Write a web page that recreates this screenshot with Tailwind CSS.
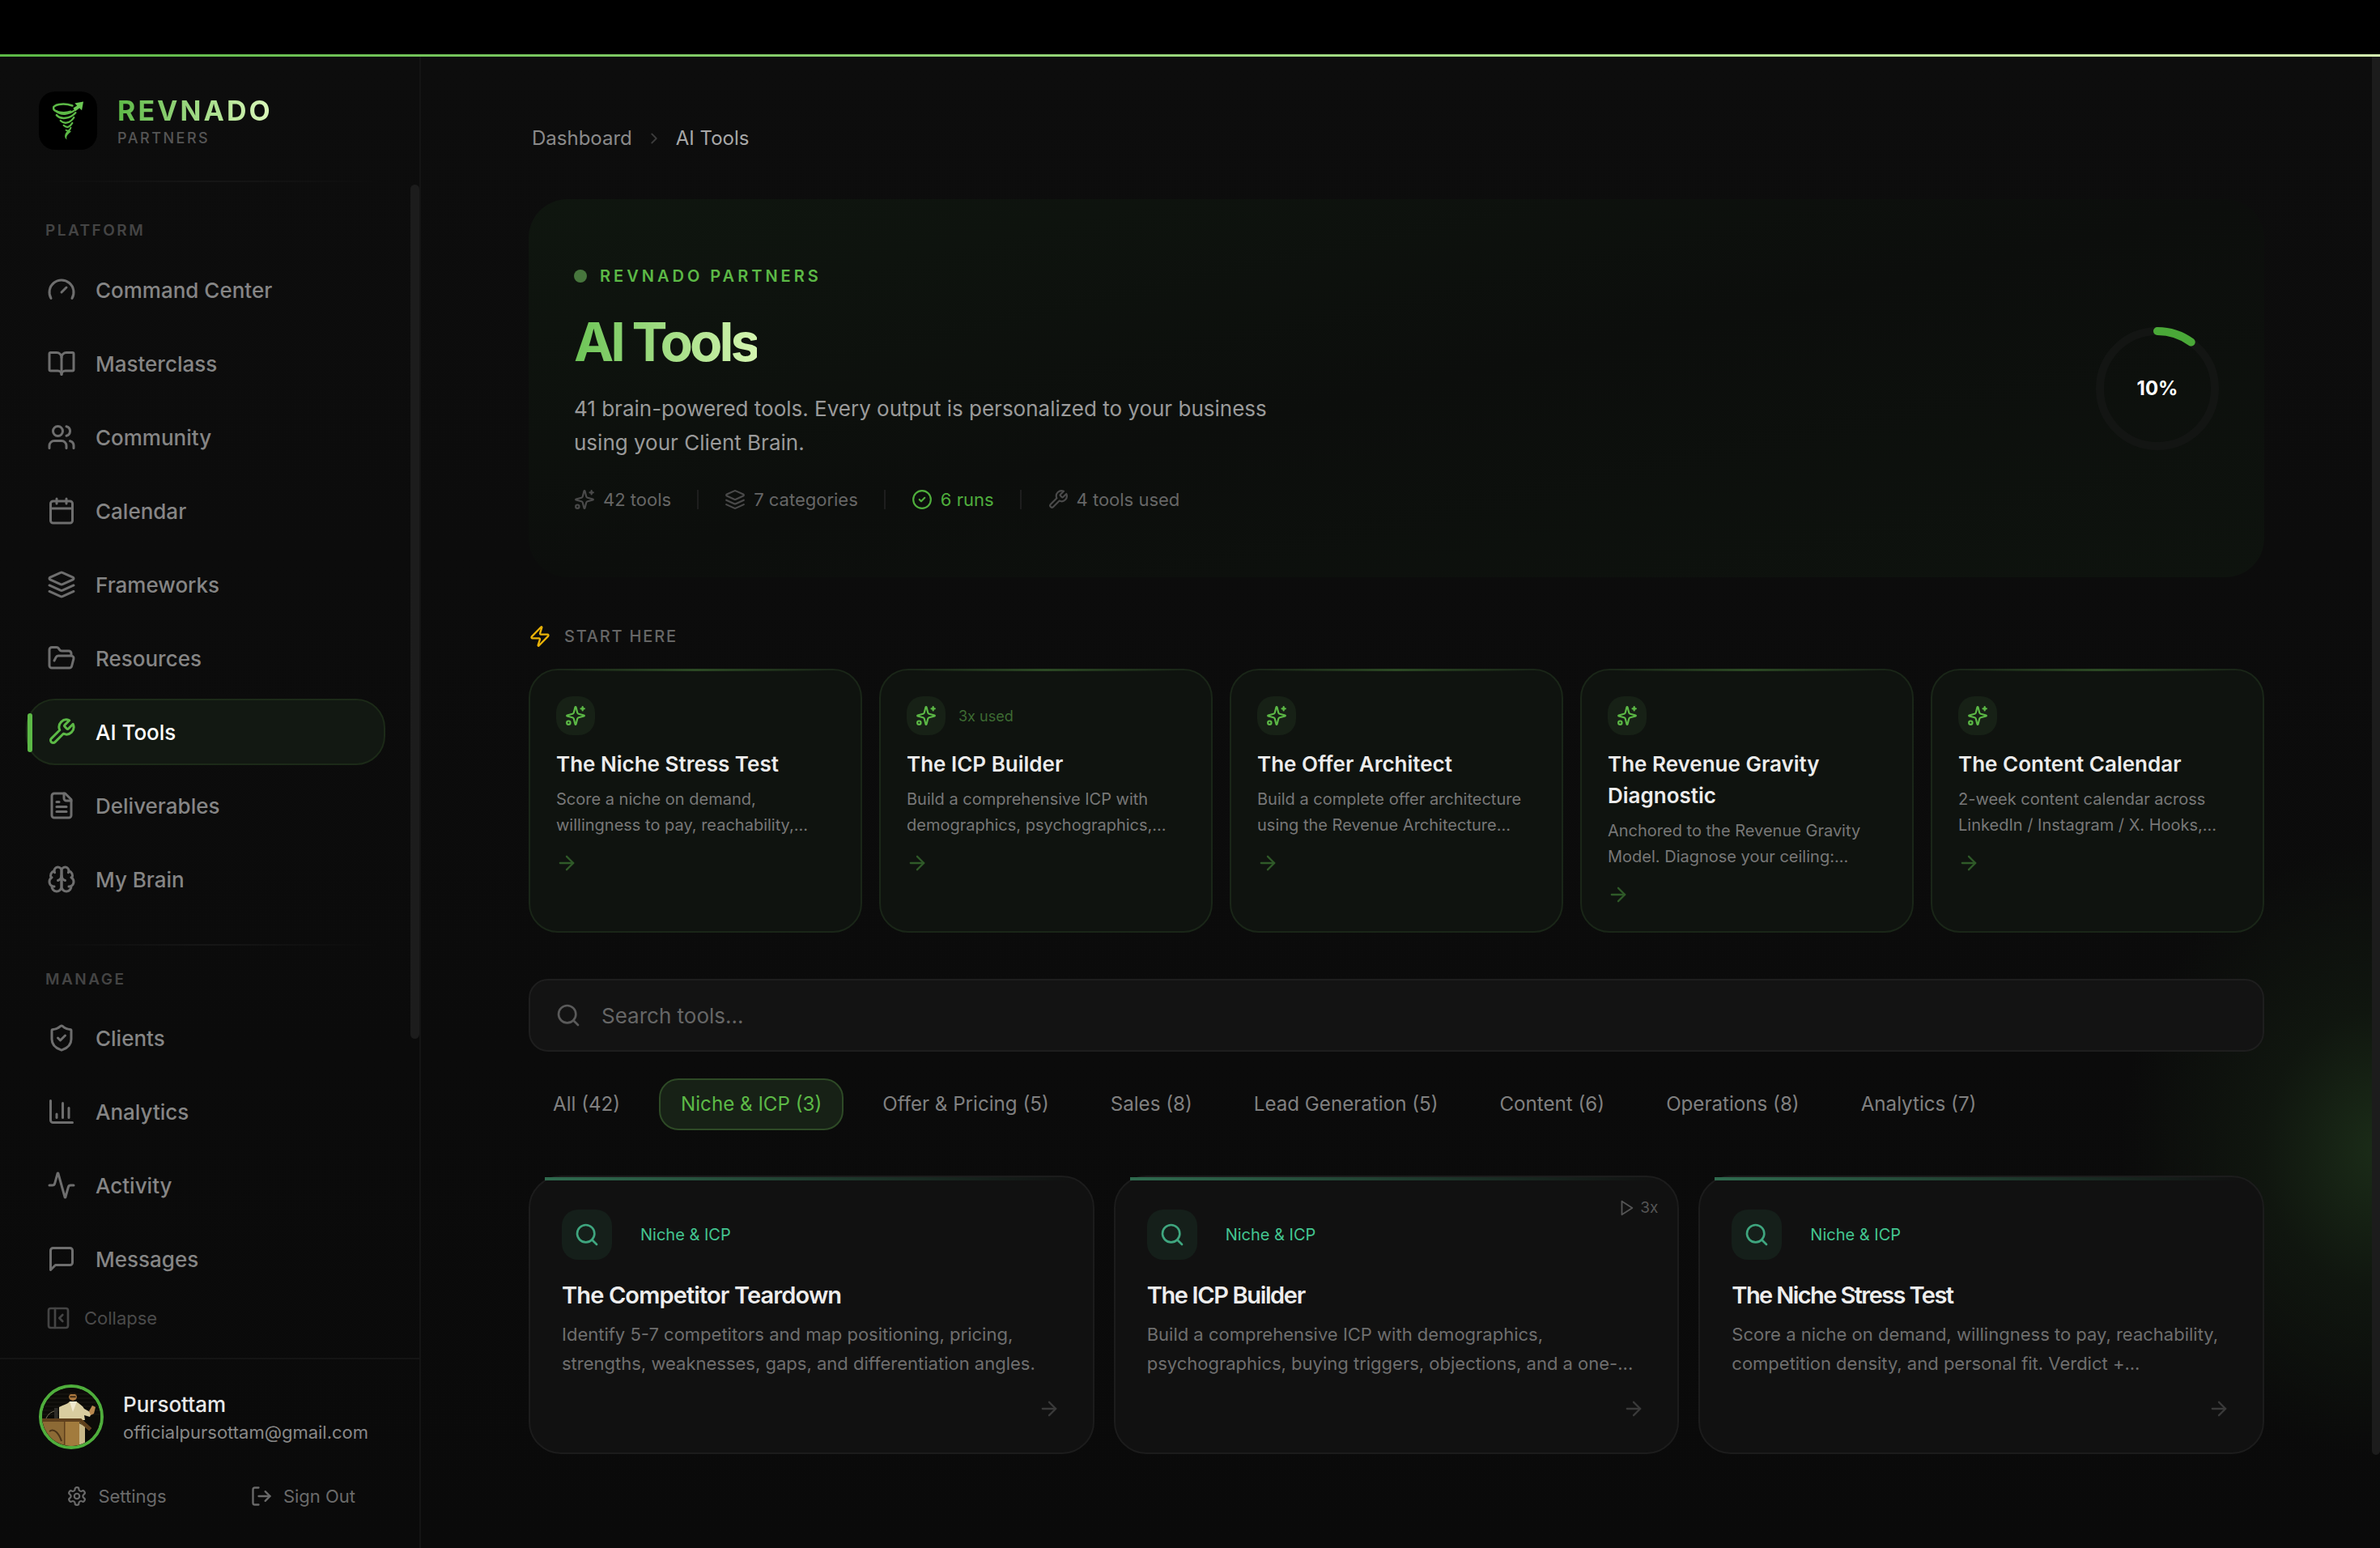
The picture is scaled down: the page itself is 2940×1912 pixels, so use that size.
<!doctype html>
<html lang="en">
<head>
<meta charset="utf-8">
<title>AI Tools</title>
<script src="https://cdn.jsdelivr.net/npm/@tailwindcss/browser@4"></script>
</head>
<body class="bg-black font-[family-name:Inter,sans-serif]">
<div class="w-[2940px] h-[1912px] flex flex-col overflow-hidden">
  <div class="h-[67px] shrink-0 bg-black"></div>
  <div class="h-[3px] shrink-0 bg-linear-to-r from-[#5cb946] to-[#d4f5b0]"></div>
  <div class="flex-1 flex min-h-0 bg-linear-to-b from-[#0d0d0d] to-[#0a0a0a]">

    <!-- SIDEBAR -->
    <aside class="relative w-[520px] shrink-0 border-r-2 border-[#141414] flex flex-col">
      <div class="absolute left-[507px] top-[158px] w-[11px] h-[1055px] rounded-full bg-[#1c1c1c]"></div>
      <div class="flex items-center gap-[25px] px-[48px] pt-[43px]">
        <div class="w-[72px] h-[72px] rounded-[20px] bg-black flex items-center justify-center">
          <svg viewBox="0 0 40 48" class="w-[39px] h-[48px] fill-none" stroke-linecap="round">
            <g class="stroke-[#5cb946]">
              <path stroke-width="2.600" d="M25 5C13 1 0 4 1 8.500C2 13.500 14 15.500 23 12.500"/>
              <path stroke-width="2.400" d="M5 12C10 17 20 17 29 10"/>
              <path stroke-width="2.600" d="M5 17C10 23 22 22 29 14"/>
              <path stroke-width="2.400" d="M10 24C15 29 22 27 27 20"/>
              <path stroke-width="2.200" d="M14 30C18 34 22 32 25 27"/>
              <path stroke-width="2" d="M17 36C20 38 22 36 23 33"/>
            </g>
            <path d="M28 2L39 0L37 11L34 8L29 12L26 8L31 5Z" class="fill-[#6cc954]"/>
            <path d="M20 36C15 40 14 45 18 48C16.500 43 20 41 23.500 37.500Z" class="fill-[#5cb946]"/>
          </svg>
        </div>
        <div class="flex flex-col">
          <span class="text-[34px] leading-[42px] font-bold tracking-[0.09em] w-fit bg-linear-to-r from-[#5cb946] to-[#dcf8bc] bg-clip-text text-transparent">REVNADO</span>
          <span class="mt-[1px] text-[18px] leading-[24px] font-medium tracking-[0.14em] text-[#555555]">PARTNERS</span>
        </div>
      </div>
      <div class="h-[2px] mt-[38px] mx-[48px] bg-linear-to-r from-transparent via-[#161616] to-transparent"></div>

      <div class="mt-[48px] pl-[56px] text-[19px] leading-[24px] font-semibold tracking-[0.13em] text-[#444444]">PLATFORM</div>
      <nav class="mt-[20px] w-[476px] pl-[32px] flex flex-col gap-[9px] text-[26px] font-medium text-[#858585]">
        <a class="h-[82px] flex items-center gap-[24px] pl-[26px]"><svg viewBox="0 0 24 24" class="w-9 h-9 shrink-0 fill-none stroke-current stroke-2 text-[#6e6e6e]" stroke-linecap="round" stroke-linejoin="round"><path d="m12 14 4-4"/><path d="M3.340 19a10 10 0 1 1 17.320 0"/></svg>Command Center</a>
        <a class="h-[82px] flex items-center gap-[24px] pl-[26px]"><svg viewBox="0 0 24 24" class="w-9 h-9 shrink-0 fill-none stroke-current stroke-2 text-[#6e6e6e]" stroke-linecap="round" stroke-linejoin="round"><path d="M12 7v14"/><path d="M3 18a1 1 0 0 1-1-1V4a1 1 0 0 1 1-1h5a4 4 0 0 1 4 4 4 4 0 0 1 4-4h5a1 1 0 0 1 1 1v13a1 1 0 0 1-1 1h-6a3 3 0 0 0-3 3 3 3 0 0 0-3-3z"/></svg>Masterclass</a>
        <a class="h-[82px] flex items-center gap-[24px] pl-[26px]"><svg viewBox="0 0 24 24" class="w-9 h-9 shrink-0 fill-none stroke-current stroke-2 text-[#6e6e6e]" stroke-linecap="round" stroke-linejoin="round"><path d="M16 21v-2a4 4 0 0 0-4-4H6a4 4 0 0 0-4 4v2"/><circle cx="9" cy="7" r="4"/><path d="M22 21v-2a4 4 0 0 0-3-3.870"/><path d="M16 3.130a4 4 0 0 1 0 7.750"/></svg>Community</a>
        <a class="h-[82px] flex items-center gap-[24px] pl-[26px]"><svg viewBox="0 0 24 24" class="w-9 h-9 shrink-0 fill-none stroke-current stroke-2 text-[#6e6e6e]" stroke-linecap="round" stroke-linejoin="round"><path d="M8 2v4"/><path d="M16 2v4"/><rect width="18" height="18" x="3" y="4" rx="2"/><path d="M3 10h18"/></svg>Calendar</a>
        <a class="h-[82px] flex items-center gap-[24px] pl-[26px]"><svg viewBox="0 0 24 24" class="w-9 h-9 shrink-0 fill-none stroke-current stroke-2 text-[#6e6e6e]" stroke-linecap="round" stroke-linejoin="round"><path d="m12.830 2.180a2 2 0 0 0-1.660 0L2.600 6.080a1 1 0 0 0 0 1.830l8.580 3.910a2 2 0 0 0 1.660 0l8.580-3.900a1 1 0 0 0 0-1.830Z"/><path d="m22 17.650-9.170 4.160a2 2 0 0 1-1.660 0L2 17.650"/><path d="m22 12.650-9.170 4.160a2 2 0 0 1-1.660 0L2 12.650"/></svg>Frameworks</a>
        <a class="h-[82px] flex items-center gap-[24px] pl-[26px]"><svg viewBox="0 0 24 24" class="w-9 h-9 shrink-0 fill-none stroke-current stroke-2 text-[#6e6e6e]" stroke-linecap="round" stroke-linejoin="round"><path d="m6 14 1.500-2.900A2 2 0 0 1 9.240 10H20a2 2 0 0 1 1.940 2.500l-1.540 6a2 2 0 0 1-1.950 1.500H4a2 2 0 0 1-2-2V5a2 2 0 0 1 2-2h3.900a2 2 0 0 1 1.690.9l.81 1.200a2 2 0 0 0 1.670.9H18a2 2 0 0 1 2 2v2"/></svg>Resources</a>
        <a class="relative h-[82px] flex items-center gap-[24px] pl-[24px] rounded-[36px] bg-[#121812] border-2 border-[#1c2a18] text-white">
          <span class="absolute left-[0px] top-[16px] w-[6px] h-[48px] rounded-full bg-[#5cb946]"></span>
          <svg viewBox="0 0 24 24" class="w-9 h-9 shrink-0 fill-none stroke-current stroke-2 text-[#5cb946]" stroke-linecap="round" stroke-linejoin="round"><path d="M14.700 6.300a1 1 0 0 0 0 1.400l1.600 1.600a1 1 0 0 0 1.400 0l3.770-3.770a6 6 0 0 1-7.940 7.940l-6.910 6.910a2.120 2.120 0 0 1-3-3l6.910-6.910a6 6 0 0 1 7.940-7.940l-3.760 3.760z"/></svg>AI Tools</a>
        <a class="h-[82px] flex items-center gap-[24px] pl-[26px]"><svg viewBox="0 0 24 24" class="w-9 h-9 shrink-0 fill-none stroke-current stroke-2 text-[#6e6e6e]" stroke-linecap="round" stroke-linejoin="round"><path d="M15 2H6a2 2 0 0 0-2 2v16a2 2 0 0 0 2 2h12a2 2 0 0 0 2-2V7Z"/><path d="M14 2v4a2 2 0 0 0 2 2h4"/><path d="M10 9H8"/><path d="M16 13H8"/><path d="M16 17H8"/></svg>Deliverables</a>
        <a class="h-[82px] flex items-center gap-[24px] pl-[26px]"><svg viewBox="0 0 24 24" class="w-9 h-9 shrink-0 fill-none stroke-current stroke-2 text-[#6e6e6e]" stroke-linecap="round" stroke-linejoin="round"><path d="M12 5a3 3 0 1 0-5.997.125 4 4 0 0 0-2.526 5.770 4 4 0 0 0 .556 6.588A4 4 0 1 0 12 18Z"/><path d="M12 5a3 3 0 1 1 5.997.125 4 4 0 0 1 2.526 5.770 4 4 0 0 1-.556 6.588A4 4 0 1 1 12 18Z"/><path d="M15 13a4.500 4.500 0 0 1-3-4 4.500 4.500 0 0 1-3 4"/><path d="M17.599 6.500a3 3 0 0 0 .399-1.375"/><path d="M6.003 5.125A3 3 0 0 0 6.401 6.500"/><path d="M3.477 10.896a4 4 0 0 1 .585-.396"/><path d="M19.938 10.500a4 4 0 0 1 .585.396"/><path d="M6 18a4 4 0 0 1-1.967-.516"/><path d="M19.967 17.484A4 4 0 0 1 18 18"/></svg>My Brain</a>
      </nav>
      <div class="h-[2px] mt-[39px] mx-[48px] bg-linear-to-r from-transparent via-[#161616] to-transparent"></div>
      <div class="mt-[30px] pl-[56px] text-[19px] leading-[24px] font-semibold tracking-[0.13em] text-[#444444]">MANAGE</div>
      <nav class="mt-[19px] w-[476px] pl-[32px] flex flex-col gap-[9px] text-[26px] font-medium text-[#858585]">
        <a class="h-[82px] flex items-center gap-[24px] pl-[26px]"><svg viewBox="0 0 24 24" class="w-9 h-9 shrink-0 fill-none stroke-current stroke-2 text-[#6e6e6e]" stroke-linecap="round" stroke-linejoin="round"><path d="M20 13c0 5-3.500 7.500-7.660 8.950a1 1 0 0 1-.67-.01C7.500 20.500 4 18 4 13V6a1 1 0 0 1 1-1c2 0 4.500-1.200 6.240-2.720a1.170 1.170 0 0 1 1.520 0C14.510 3.810 17 5 19 5a1 1 0 0 1 1 1z"/><path d="m9 12 2 2 4-4"/></svg>Clients</a>
        <a class="h-[82px] flex items-center gap-[24px] pl-[26px]"><svg viewBox="0 0 24 24" class="w-9 h-9 shrink-0 fill-none stroke-current stroke-2 text-[#6e6e6e]" stroke-linecap="round" stroke-linejoin="round"><path d="M3 3v16a2 2 0 0 0 2 2h16"/><path d="M18 17V9"/><path d="M13 17V5"/><path d="M8 17v-3"/></svg>Analytics</a>
        <a class="h-[82px] flex items-center gap-[24px] pl-[26px]"><svg viewBox="0 0 24 24" class="w-9 h-9 shrink-0 fill-none stroke-current stroke-2 text-[#6e6e6e]" stroke-linecap="round" stroke-linejoin="round"><path d="M22 12h-2.480a2 2 0 0 0-1.930 1.460l-2.350 8.360a.25.25 0 0 1-.48 0L9.240 2.180a.25.25 0 0 0-.48 0l-2.350 8.360A2 2 0 0 1 4.490 12H2"/></svg>Activity</a>
        <a class="h-[82px] flex items-center gap-[24px] pl-[26px]"><svg viewBox="0 0 24 24" class="w-9 h-9 shrink-0 fill-none stroke-current stroke-2 text-[#6e6e6e]" stroke-linecap="round" stroke-linejoin="round"><path d="M21 15a2 2 0 0 1-2 2H7l-4 4V5a2 2 0 0 1 2-2h14a2 2 0 0 1 2 2z"/></svg>Messages</a>
      </nav>
      <div class="mt-[16px] h-[32px] pl-[56px] flex items-center gap-[16px] text-[22px] text-[#4a4a4a]"><svg viewBox="0 0 24 24" class="w-8 h-8 shrink-0 fill-none stroke-current stroke-2 text-[#444444]" stroke-linecap="round" stroke-linejoin="round"><rect width="18" height="18" x="3" y="3" rx="2"/><path d="M9 3v18"/><path d="m16 15-3-3 3-3"/></svg>Collapse</div>
      <div class="mt-[33px] border-t-2 border-[#141414] pt-[31px]">
        <div class="flex items-center gap-[24px] px-[48px]">
          <div class="w-[80px] h-[80px] shrink-0 rounded-full border-[4px] border-[#4fae3c] overflow-hidden bg-[#0a0906]">
            <svg viewBox="0 0 72 72" class="w-full h-full">
              <rect width="72" height="72" fill="#0c0b08"/>
              <g stroke="#1c1a14" stroke-width="1.200"><path d="M0 8h72M0 13h72M0 18h72M0 23h72M0 28h72M0 33h72"/></g>
              <path d="M21 24C27 21 32 20 34 17L42 17C46 20 50 22 52 26L61 31L59 36L52 34L53 40H21Z" fill="#d9cda0"/>
              <path d="M34 17L38 30L43 17Z" fill="#f1ead0"/>
              <circle cx="38" cy="11" r="5" fill="#a7753c"/>
              <path d="M33 10.500C33 4 43 4 43 10.500L41 8H35Z" fill="#17130d"/>
              <path d="M34.500 10.500h7v1.500h-7z" fill="#2a1e10"/>
              <path d="M58 29L62 22L66 24L64 32L60 34Z" fill="#b9894f"/>
              <path d="M15 25h4.500v13H15z" fill="#2e2c28"/>
              <path d="M5 38C7 33 11 30 15 29" stroke="#7d7660" stroke-width="1" fill="none"/>
              <path d="M46 44L53 48L53 72H46Z" fill="#c9b98a"/>
              <path d="M0 38L48 38L61 50L58 53L46 43L46 72L0 72Z" fill="#8d6a35"/>
              <path d="M28 42L46 42L46 72L28 72Z" fill="#a27b3d"/>
              <path d="M0 38L48 38L61 50L58 53L46 42L0 42Z" fill="#5e3f1c"/>
              <path d="M27 42h1.500v30H27z" fill="#5e3f1c"/>
              <path d="M9 54C15 49 21 57 24 66" stroke="#4b3418" stroke-width="2" fill="none"/>
            </svg>
          </div>
          <div class="flex flex-col pt-[4px]">
            <span class="text-[26px] leading-[34px] font-medium text-[#e8e8e8]">Pursottam</span>
            <span class="text-[22px] leading-[34px] text-[#888888]">officialpursottam@gmail.com</span>
          </div>
        </div>
        <div class="mt-[42px] px-[29px] grid grid-cols-2 text-[22px] leading-[32px] text-[#6a6a6a]">
          <div class="flex items-center justify-center gap-[13px]"><svg viewBox="0 0 24 24" class="w-[26px] h-[26px] fill-none stroke-current stroke-2" stroke-linecap="round" stroke-linejoin="round"><path d="M12.220 2h-.44a2 2 0 0 0-2 2v.18a2 2 0 0 1-1 1.730l-.43.25a2 2 0 0 1-2 0l-.15-.08a2 2 0 0 0-2.730.73l-.22.38a2 2 0 0 0 .73 2.730l.15.1a2 2 0 0 1 1 1.720v.51a2 2 0 0 1-1 1.740l-.15.09a2 2 0 0 0-.73 2.730l.22.38a2 2 0 0 0 2.730.73l.15-.08a2 2 0 0 1 2 0l.43.25a2 2 0 0 1 1 1.730V20a2 2 0 0 0 2 2h.44a2 2 0 0 0 2-2v-.18a2 2 0 0 1 1-1.730l.43-.25a2 2 0 0 1 2 0l.15.08a2 2 0 0 0 2.730-.73l.22-.39a2 2 0 0 0-.73-2.730l-.15-.08a2 2 0 0 1-1-1.740v-.5a2 2 0 0 1 1-1.740l.15-.09a2 2 0 0 0 .73-2.730l-.22-.38a2 2 0 0 0-2.730-.73l-.15.08a2 2 0 0 1-2 0l-.43-.25a2 2 0 0 1-1-1.730V4a2 2 0 0 0-2-2z"/><circle cx="12" cy="12" r="3"/></svg>Settings</div>
          <div class="flex items-center justify-center gap-[13px]"><svg viewBox="0 0 24 24" class="w-[28px] h-[28px] fill-none stroke-current stroke-2" stroke-linecap="round" stroke-linejoin="round"><path d="M9 21H5a2 2 0 0 1-2-2V5a2 2 0 0 1 2-2h4"/><polyline points="16 17 21 12 16 7"/><line x1="21" x2="9" y1="12" y2="12"/></svg>Sign Out</div>
        </div>
      </div>
    </aside>

    <!-- MAIN -->
    <main class="relative flex-1 min-w-0 overflow-hidden pl-[133px] pr-[143px]">
      <div class="absolute right-0 top-[970px] w-[640px] h-[760px] translate-x-[320px] bg-[radial-gradient(closest-side,#1b2c18,#10160f_45%,transparent)]"></div>
      <div class="absolute right-0 top-0 w-[10px] h-[1727px] rounded-b-full bg-[#1c1c1c]"></div>

      <div class="relative">
        <div class="pt-[85px] pl-[4px] h-[117px] flex items-center gap-[16px] text-[24px] leading-[32px] text-[#8a8a8a]">
          <span>Dashboard</span>
          <svg viewBox="0 0 24 24" class="w-[22px] h-[22px] fill-none stroke-current stroke-2 text-[#3c3c3c]" stroke-linecap="round" stroke-linejoin="round"><path d="m9 18 6-6-6-6"/></svg>
          <span class="text-[#a8a8a8]">AI Tools</span>
        </div>

        <section class="mt-[59px] h-[467px] rounded-[48px] bg-linear-to-br from-[#0f160f] via-[#0c0e0c] to-[#0e130e] pl-[56px] pr-[56px] py-[80px] flex items-center justify-between">
          <div>
            <div class="h-[30px] flex items-center gap-[16px]">
              <span class="w-[16px] h-[16px] rounded-full bg-[#47763d]"></span>
              <span class="text-[20px] font-semibold tracking-[0.2em] text-[#5cb946]">REVNADO PARTNERS</span>
            </div>
            <h1 class="mt-[26px] text-[66px] leading-[80px] font-bold tracking-[-0.06em] w-fit bg-linear-to-r from-[#6cc456] to-[#d4f5b0] bg-clip-text text-transparent">AI Tools</h1>
            <p class="mt-[22px] w-[900px] text-[26px] leading-[42px] text-[#9a9a9a]">41 brain-powered tools. Every output is personalized to your business using your Client Brain.</p>
            <div class="mt-[33px] h-[32px] flex items-center text-[22px] text-[#666666]">
              <svg viewBox="0 0 24 24" class="w-[26px] h-[26px] fill-none stroke-current stroke-2 text-[#4a4a4a]" stroke-linecap="round" stroke-linejoin="round"><path d="M9.937 15.500A2 2 0 0 0 8.500 14.063l-6.135-1.582a.5.5 0 0 1 0-.962L8.500 9.936A2 2 0 0 0 9.937 8.500l1.582-6.135a.5.5 0 0 1 .963 0L14.063 8.500A2 2 0 0 0 15.500 9.937l6.135 1.581a.5.5 0 0 1 0 .964L15.500 14.063a2 2 0 0 0-1.437 1.437l-1.582 6.135a.5.5 0 0 1-.963 0z"/><path d="M20 2v4"/><path d="M22 4h-4"/><circle cx="4" cy="20" r="2"/></svg>
              <span class="ml-[10px]">42 tools</span>
              <span class="mx-[32px] w-[2px] h-[24px] bg-[#1e1e1e]"></span>
              <svg viewBox="0 0 24 24" class="w-[26px] h-[26px] fill-none stroke-current stroke-2 text-[#4a4a4a]" stroke-linecap="round" stroke-linejoin="round"><path d="m12.830 2.180a2 2 0 0 0-1.660 0L2.600 6.080a1 1 0 0 0 0 1.830l8.580 3.910a2 2 0 0 0 1.660 0l8.580-3.900a1 1 0 0 0 0-1.830Z"/><path d="m22 17.650-9.170 4.160a2 2 0 0 1-1.660 0L2 17.650"/><path d="m22 12.650-9.170 4.160a2 2 0 0 1-1.660 0L2 12.650"/></svg>
              <span class="ml-[10px]">7 categories</span>
              <span class="mx-[32px] w-[2px] h-[24px] bg-[#1e1e1e]"></span>
              <svg viewBox="0 0 24 24" class="w-[26px] h-[26px] fill-none stroke-current stroke-2 text-[#4fae3c]" stroke-linecap="round" stroke-linejoin="round"><circle cx="12" cy="12" r="10"/><path d="m9 12 2 2 4-4"/></svg>
              <span class="ml-[10px] text-[#4fae3c]">6 runs</span>
              <span class="mx-[32px] w-[2px] h-[24px] bg-[#1e1e1e]"></span>
              <svg viewBox="0 0 24 24" class="w-[26px] h-[26px] fill-none stroke-current stroke-2 text-[#4a4a4a]" stroke-linecap="round" stroke-linejoin="round"><path d="M14.700 6.300a1 1 0 0 0 0 1.400l1.600 1.600a1 1 0 0 0 1.400 0l3.770-3.770a6 6 0 0 1-7.940 7.940l-6.910 6.910a2.120 2.120 0 0 1-3-3l6.910-6.910a6 6 0 0 1 7.940-7.940l-3.760 3.760z"/></svg>
              <span class="ml-[10px]">4 tools used</span>
            </div>
          </div>
          <div class="relative w-[152px] h-[152px] flex items-center justify-center">
            <svg viewBox="0 0 152 152" class="absolute inset-0 w-full h-full -rotate-90 fill-none">
              <circle cx="76" cy="76" r="71" stroke="#131513" stroke-width="10"/>
              <circle cx="76" cy="76" r="71" stroke="#4aa838" stroke-width="10" stroke-linecap="round" stroke-dasharray="44.600 446"/>
            </svg>
            <span class="relative text-[24px] font-bold text-white">10%</span>
          </div>
        </section>

        <div class="mt-[57px] h-[32px] flex items-center gap-[16px] text-[20px] font-medium tracking-[0.09em] text-[#666666]">
          <svg viewBox="0 0 24 24" class="w-[28px] h-[28px] fill-none stroke-current stroke-2 text-[#eab308]" stroke-linecap="round" stroke-linejoin="round"><path d="M4 14a1 1 0 0 1-.78-1.630l9.900-10.200a.5.5 0 0 1 .86.46l-1.920 6.020A1 1 0 0 0 13 10h7a1 1 0 0 1 .78 1.630l-9.900 10.200a.5.5 0 0 1-.86-.46l1.920-6.020A1 1 0 0 0 11 14z"/></svg>
          START HERE
        </div>

        <div class="mt-[24px] grid grid-cols-5 gap-[21px]">
          <article class="relative h-[326px] rounded-[36px] bg-[#0f130f] border-2 border-[#1a2618] px-[32px] pt-[32px]">
            <span class="absolute -top-[2px] left-[40px] right-[40px] h-[3px] bg-linear-to-r from-transparent via-[#2c4a24] to-transparent"></span>
            <div class="h-[48px] flex items-center gap-[16px]"><span class="w-[48px] h-[48px] rounded-[20px] bg-[#172116] flex items-center justify-center"><svg viewBox="0 0 24 24" class="w-[26px] h-[26px] fill-none stroke-current stroke-2 text-[#5cb946]" stroke-linecap="round" stroke-linejoin="round"><path d="M9.937 15.500A2 2 0 0 0 8.500 14.063l-6.135-1.582a.5.5 0 0 1 0-.962L8.500 9.936A2 2 0 0 0 9.937 8.500l1.582-6.135a.5.5 0 0 1 .963 0L14.063 8.500A2 2 0 0 0 15.500 9.937l6.135 1.581a.5.5 0 0 1 0 .964L15.500 14.063a2 2 0 0 0-1.437 1.437l-1.582 6.135a.5.5 0 0 1-.963 0z"/><path d="M20 2v4"/><path d="M22 4h-4"/><circle cx="4" cy="20" r="2"/></svg></span></div>
            <h3 class="mt-[16px] text-[26px] leading-[39px] font-semibold text-[#ececec]">The Niche Stress Test</h3>
            <p class="mt-[8px] text-[20px] leading-[32px] text-[#777777]">Score a niche on demand, willingness to pay, reachability,...</p>
            <svg viewBox="0 0 24 24" class="mt-[17px] -ml-[1px] w-[28px] h-[28px] fill-none stroke-current stroke-2 text-[#2f5a28]" stroke-linecap="round" stroke-linejoin="round"><path d="M5 12h14"/><path d="m12 5 7 7-7 7"/></svg>
          </article>
          <article class="relative h-[326px] rounded-[36px] bg-[#0f130f] border-2 border-[#1a2618] px-[32px] pt-[32px]">
            <span class="absolute -top-[2px] left-[40px] right-[40px] h-[3px] bg-linear-to-r from-transparent via-[#2c4a24] to-transparent"></span>
            <div class="h-[48px] flex items-center gap-[16px]"><span class="w-[48px] h-[48px] rounded-[20px] bg-[#172116] flex items-center justify-center"><svg viewBox="0 0 24 24" class="w-[26px] h-[26px] fill-none stroke-current stroke-2 text-[#5cb946]" stroke-linecap="round" stroke-linejoin="round"><path d="M9.937 15.500A2 2 0 0 0 8.500 14.063l-6.135-1.582a.5.5 0 0 1 0-.962L8.500 9.936A2 2 0 0 0 9.937 8.500l1.582-6.135a.5.5 0 0 1 .963 0L14.063 8.500A2 2 0 0 0 15.500 9.937l6.135 1.581a.5.5 0 0 1 0 .964L15.500 14.063a2 2 0 0 0-1.437 1.437l-1.582 6.135a.5.5 0 0 1-.963 0z"/><path d="M20 2v4"/><path d="M22 4h-4"/><circle cx="4" cy="20" r="2"/></svg></span><span class="text-[18px] text-[#3d6b32]">3x used</span></div>
            <h3 class="mt-[16px] text-[26px] leading-[39px] font-semibold text-[#ececec]">The ICP Builder</h3>
            <p class="mt-[8px] text-[20px] leading-[32px] text-[#777777]">Build a comprehensive ICP with demographics, psychographics,...</p>
            <svg viewBox="0 0 24 24" class="mt-[17px] -ml-[1px] w-[28px] h-[28px] fill-none stroke-current stroke-2 text-[#2f5a28]" stroke-linecap="round" stroke-linejoin="round"><path d="M5 12h14"/><path d="m12 5 7 7-7 7"/></svg>
          </article>
          <article class="relative h-[326px] rounded-[36px] bg-[#0f130f] border-2 border-[#1a2618] px-[32px] pt-[32px]">
            <span class="absolute -top-[2px] left-[40px] right-[40px] h-[3px] bg-linear-to-r from-transparent via-[#2c4a24] to-transparent"></span>
            <div class="h-[48px] flex items-center gap-[16px]"><span class="w-[48px] h-[48px] rounded-[20px] bg-[#172116] flex items-center justify-center"><svg viewBox="0 0 24 24" class="w-[26px] h-[26px] fill-none stroke-current stroke-2 text-[#5cb946]" stroke-linecap="round" stroke-linejoin="round"><path d="M9.937 15.500A2 2 0 0 0 8.500 14.063l-6.135-1.582a.5.5 0 0 1 0-.962L8.500 9.936A2 2 0 0 0 9.937 8.500l1.582-6.135a.5.5 0 0 1 .963 0L14.063 8.500A2 2 0 0 0 15.500 9.937l6.135 1.581a.5.5 0 0 1 0 .964L15.500 14.063a2 2 0 0 0-1.437 1.437l-1.582 6.135a.5.5 0 0 1-.963 0z"/><path d="M20 2v4"/><path d="M22 4h-4"/><circle cx="4" cy="20" r="2"/></svg></span></div>
            <h3 class="mt-[16px] text-[26px] leading-[39px] font-semibold text-[#ececec]">The Offer Architect</h3>
            <p class="mt-[8px] text-[20px] leading-[32px] text-[#777777]">Build a complete offer architecture using the Revenue Architecture...</p>
            <svg viewBox="0 0 24 24" class="mt-[17px] -ml-[1px] w-[28px] h-[28px] fill-none stroke-current stroke-2 text-[#2f5a28]" stroke-linecap="round" stroke-linejoin="round"><path d="M5 12h14"/><path d="m12 5 7 7-7 7"/></svg>
          </article>
          <article class="relative h-[326px] rounded-[36px] bg-[#0f130f] border-2 border-[#1a2618] px-[32px] pt-[32px]">
            <span class="absolute -top-[2px] left-[40px] right-[40px] h-[3px] bg-linear-to-r from-transparent via-[#2c4a24] to-transparent"></span>
            <div class="h-[48px] flex items-center gap-[16px]"><span class="w-[48px] h-[48px] rounded-[20px] bg-[#172116] flex items-center justify-center"><svg viewBox="0 0 24 24" class="w-[26px] h-[26px] fill-none stroke-current stroke-2 text-[#5cb946]" stroke-linecap="round" stroke-linejoin="round"><path d="M9.937 15.500A2 2 0 0 0 8.500 14.063l-6.135-1.582a.5.5 0 0 1 0-.962L8.500 9.936A2 2 0 0 0 9.937 8.500l1.582-6.135a.5.5 0 0 1 .963 0L14.063 8.500A2 2 0 0 0 15.500 9.937l6.135 1.581a.5.5 0 0 1 0 .964L15.500 14.063a2 2 0 0 0-1.437 1.437l-1.582 6.135a.5.5 0 0 1-.963 0z"/><path d="M20 2v4"/><path d="M22 4h-4"/><circle cx="4" cy="20" r="2"/></svg></span></div>
            <h3 class="mt-[16px] text-[26px] leading-[39px] font-semibold text-[#ececec]">The Revenue Gravity Diagnostic</h3>
            <p class="mt-[8px] text-[20px] leading-[32px] text-[#777777]">Anchored to the Revenue Gravity Model. Diagnose your ceiling:...</p>
            <svg viewBox="0 0 24 24" class="mt-[17px] -ml-[1px] w-[28px] h-[28px] fill-none stroke-current stroke-2 text-[#2f5a28]" stroke-linecap="round" stroke-linejoin="round"><path d="M5 12h14"/><path d="m12 5 7 7-7 7"/></svg>
          </article>
          <article class="relative h-[326px] rounded-[36px] bg-[#0f130f] border-2 border-[#1a2618] px-[32px] pt-[32px]">
            <span class="absolute -top-[2px] left-[40px] right-[40px] h-[3px] bg-linear-to-r from-transparent via-[#2c4a24] to-transparent"></span>
            <div class="h-[48px] flex items-center gap-[16px]"><span class="w-[48px] h-[48px] rounded-[20px] bg-[#172116] flex items-center justify-center"><svg viewBox="0 0 24 24" class="w-[26px] h-[26px] fill-none stroke-current stroke-2 text-[#5cb946]" stroke-linecap="round" stroke-linejoin="round"><path d="M9.937 15.500A2 2 0 0 0 8.500 14.063l-6.135-1.582a.5.5 0 0 1 0-.962L8.500 9.936A2 2 0 0 0 9.937 8.500l1.582-6.135a.5.5 0 0 1 .963 0L14.063 8.500A2 2 0 0 0 15.500 9.937l6.135 1.581a.5.5 0 0 1 0 .964L15.500 14.063a2 2 0 0 0-1.437 1.437l-1.582 6.135a.5.5 0 0 1-.963 0z"/><path d="M20 2v4"/><path d="M22 4h-4"/><circle cx="4" cy="20" r="2"/></svg></span></div>
            <h3 class="mt-[16px] text-[26px] leading-[39px] font-semibold text-[#ececec]">The Content Calendar</h3>
            <p class="mt-[8px] text-[20px] leading-[32px] text-[#777777]">2-week content calendar across LinkedIn / Instagram / X. Hooks,...</p>
            <svg viewBox="0 0 24 24" class="mt-[17px] -ml-[1px] w-[28px] h-[28px] fill-none stroke-current stroke-2 text-[#2f5a28]" stroke-linecap="round" stroke-linejoin="round"><path d="M5 12h14"/><path d="m12 5 7 7-7 7"/></svg>
          </article>
        </div>

        <div class="mt-[57px] h-[90px] rounded-[24px] bg-[#131313] border-2 border-[#1e1e1e] pl-[31px] flex items-center gap-[25px] text-[26px] text-[#666666]">
          <svg viewBox="0 0 24 24" class="w-[32px] h-[32px] fill-none stroke-current stroke-2 text-[#5a5a5a]" stroke-linecap="round" stroke-linejoin="round"><path d="m21 21-4.340-4.340"/><circle cx="11" cy="11" r="8"/></svg>
          <span>Search tools...</span>
        </div>

        <div class="mt-[33px] ml-[2px] flex items-center gap-[20px] text-[24.150px] text-[#808080]">
          <span class="h-[64px] px-[28px] flex items-center">All (42)</span>
          <span class="h-[64px] px-[25px] flex items-center rounded-[24px] bg-[#172116] border-2 border-[#2e4a26] text-[#5cb946]">Niche &amp; ICP (3)</span>
          <span class="h-[64px] px-[28px] flex items-center">Offer &amp; Pricing (5)</span>
          <span class="h-[64px] px-[28px] flex items-center">Sales (8)</span>
          <span class="h-[64px] px-[28px] flex items-center">Lead Generation (5)</span>
          <span class="h-[64px] px-[28px] flex items-center">Content (6)</span>
          <span class="h-[64px] px-[28px] flex items-center">Operations (8)</span>
          <span class="h-[64px] px-[28px] flex items-center">Analytics (7)</span>
        </div>

        <div class="mt-[56px] grid grid-cols-3 gap-[24px]">
          <article class="relative h-[344px] rounded-[40px] bg-[#111111] border-2 border-[#1c1c1c] px-[39px] pt-[40px]">
            <span class="absolute top-0 left-[18px] right-[24px] h-[4px] bg-linear-to-r from-[#2f6b4f] to-transparent"></span>
            <div class="flex items-center gap-[35px]"><span class="w-[62px] h-[62px] rounded-[20px] bg-[#151f1a] flex items-center justify-center"><svg viewBox="0 0 24 24" class="w-[32px] h-[32px] fill-none stroke-current stroke-2 text-[#3fa67f]" stroke-linecap="round" stroke-linejoin="round"><path d="m21 21-4.340-4.340"/><circle cx="11" cy="11" r="8"/></svg></span><span class="text-[20px] text-[#43c590]">Niche &amp; ICP</span></div>
            <h3 class="mt-[24px] text-[29px] leading-[40px] font-semibold tracking-[-0.03em] text-[#ededed]">The Competitor Teardown</h3>
            <p class="mt-[10px] text-[22px] leading-[36px] text-[#6e6e6e]">Identify 5-7 competitors and map positioning, pricing, strengths, weaknesses, gaps, and differentiation angles.</p>
            <svg viewBox="0 0 24 24" class="absolute right-[40px] bottom-[40px] w-[28px] h-[28px] fill-none stroke-current stroke-2 text-[#3a3a3a]" stroke-linecap="round" stroke-linejoin="round"><path d="M5 12h14"/><path d="m12 5 7 7-7 7"/></svg>
          </article>
          <article class="relative h-[344px] rounded-[40px] bg-[#111111] border-2 border-[#1c1c1c] px-[39px] pt-[40px]">
            <span class="absolute top-0 left-[18px] right-[24px] h-[4px] bg-linear-to-r from-[#2f6b4f] to-transparent"></span>
            <div class="absolute right-[24px] top-[24px] flex items-center gap-[6px] text-[19px] text-[#555555]"><svg viewBox="0 0 24 24" class="w-[22px] h-[22px] fill-none stroke-current stroke-2" stroke-linecap="round" stroke-linejoin="round"><polygon points="6 3 20 12 6 21 6 3"/></svg>3x</div>
            <div class="flex items-center gap-[35px]"><span class="w-[62px] h-[62px] rounded-[20px] bg-[#151f1a] flex items-center justify-center"><svg viewBox="0 0 24 24" class="w-[32px] h-[32px] fill-none stroke-current stroke-2 text-[#3fa67f]" stroke-linecap="round" stroke-linejoin="round"><path d="m21 21-4.340-4.340"/><circle cx="11" cy="11" r="8"/></svg></span><span class="text-[20px] text-[#43c590]">Niche &amp; ICP</span></div>
            <h3 class="mt-[24px] text-[29px] leading-[40px] font-semibold tracking-[-0.047em] text-[#ededed]">The ICP Builder</h3>
            <p class="mt-[10px] text-[22px] leading-[36px] text-[#6e6e6e]">Build a comprehensive ICP with demographics, psychographics, buying triggers, objections, and a one-...</p>
            <svg viewBox="0 0 24 24" class="absolute right-[40px] bottom-[40px] w-[28px] h-[28px] fill-none stroke-current stroke-2 text-[#3a3a3a]" stroke-linecap="round" stroke-linejoin="round"><path d="M5 12h14"/><path d="m12 5 7 7-7 7"/></svg>
          </article>
          <article class="relative h-[344px] rounded-[40px] bg-[#111111] border-2 border-[#1c1c1c] px-[39px] pt-[40px]">
            <span class="absolute top-0 left-[18px] right-[24px] h-[4px] bg-linear-to-r from-[#2f6b4f] to-transparent"></span>
            <div class="flex items-center gap-[35px]"><span class="w-[62px] h-[62px] rounded-[20px] bg-[#151f1a] flex items-center justify-center"><svg viewBox="0 0 24 24" class="w-[32px] h-[32px] fill-none stroke-current stroke-2 text-[#3fa67f]" stroke-linecap="round" stroke-linejoin="round"><path d="m21 21-4.340-4.340"/><circle cx="11" cy="11" r="8"/></svg></span><span class="text-[20px] text-[#43c590]">Niche &amp; ICP</span></div>
            <h3 class="mt-[24px] text-[29px] leading-[40px] font-semibold tracking-[-0.055em] text-[#ededed]">The Niche Stress Test</h3>
            <p class="mt-[10px] text-[22px] leading-[36px] text-[#6e6e6e]">Score a niche on demand, willingness to pay, reachability, competition density, and personal fit. Verdict +...</p>
            <svg viewBox="0 0 24 24" class="absolute right-[40px] bottom-[40px] w-[28px] h-[28px] fill-none stroke-current stroke-2 text-[#3a3a3a]" stroke-linecap="round" stroke-linejoin="round"><path d="M5 12h14"/><path d="m12 5 7 7-7 7"/></svg>
          </article>
        </div>
      </div>
    </main>
  </div>
</div>
</body>
</html>
